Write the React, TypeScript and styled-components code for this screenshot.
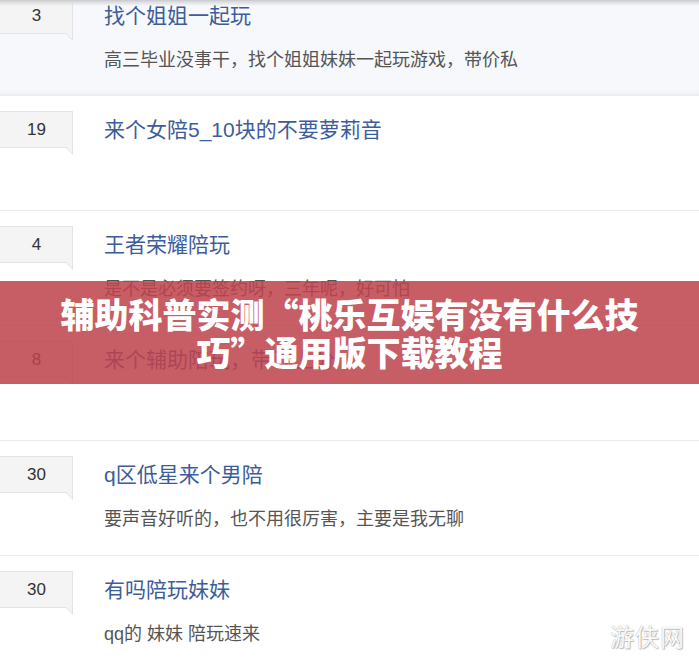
import styled, { createGlobalStyle } from 'styled-components';

type Topic = {
  count: number;
  title: string;
  desc?: string;
};

const topics: Topic[] = [
  { count: 3, title: '找个姐姐一起玩', desc: '高三毕业没事干，找个姐姐妹妹一起玩游戏，带价私' },
  { count: 19, title: '来个女陪5_10块的不要萝莉音' },
  { count: 4, title: '王者荣耀陪玩', desc: '是不是必须要签约呀，三年呢，好可怕' },
  { count: 8, title: '来个辅助陪玩，带飞上分' },
  { count: 30, title: 'q区低星来个男陪', desc: '要声音好听的，也不用很厉害，主要是我无聊' },
  { count: 30, title: '有吗陪玩妹妹', desc: 'qq的 妹妹 陪玩速来' },
];

const GlobalStyle = createGlobalStyle`
  html, body {
    margin: 0;
    padding: 0;
    background: #ffffff;
    overflow: hidden;
  }
  body {
    font-family: "Liberation Sans", "Noto Sans CJK SC", sans-serif;
  }
`;

const Page = styled.div`
  position: relative;
  width: 699px;
  height: 666px;
  overflow: hidden;
`;

const TopEdge = styled.div`
  position: absolute;
  top: 0;
  left: 0;
  right: 0;
  height: 6px;
  background: linear-gradient(#c9c9cc 0, #dcdde0 2px, rgba(240, 241, 246, 0) 6px);
  z-index: 2;
`;

const List = styled.ul`
  list-style: none;
  margin: -18px 0 0;
  padding: 0;
`;

const Row = styled.li<{ $active?: boolean }>`
  display: grid;
  grid-template-columns: 73px 1fr;
  column-gap: 31px;
  align-items: start;
  height: 114px;
  padding-top: 15px;
  box-sizing: border-box;
  border-bottom: 1px solid #ebebeb;
  background: ${(p) => (p.$active ? '#f7f8fc' : '#ffffff')};
  box-shadow: ${(p) => (p.$active ? 'inset 0 -4px 4px -2px #eceef3' : 'none')};
  & + & {
    height: 115px;
  }
`;

const Count = styled.div`
  position: relative;
  height: 37px;
  box-sizing: border-box;
  background: #f4f4f4;
  border: 1px solid #e4e4e4;
  border-left: none;
  color: #333;
  font-size: 17px;
  line-height: 35px;
  text-align: center;
  padding-left: 1px;

  &::before,
  &::after {
    content: '';
    position: absolute;
    right: -1px;
    bottom: -8px;
    width: 8px;
    height: 8px;
    clip-path: polygon(0 0, 100% 0, 100% 100%);
    background: #e2e2e2;
  }
  &::after {
    right: 0;
    bottom: -6px;
    width: 6px;
    height: 6px;
    background: #f4f4f4;
  }
`;

const Body = styled.div`
  display: flex;
  flex-direction: column;
`;

const Title = styled.a`
  color: #3d5c9b;
  font-size: 21px;
  line-height: 37px;
  text-decoration: none;
  white-space: nowrap;
`;

const Desc = styled.p`
  margin: 13px 0 0;
  color: #555;
  font-size: 18px;
  line-height: 26px;
  white-space: nowrap;
`;

const Banner = styled.div`
  position: absolute;
  top: 281px;
  left: 0;
  right: 0;
  height: 103px;
  box-sizing: border-box;
  padding-top: 14px;
  background: rgba(190, 66, 76, 0.86);
  color: #ffffff;
  font-family: "Noto Sans CJK SC", sans-serif;
  font-weight: 900;
  font-size: 34px;
  line-height: 38px;
  text-align: center;
  z-index: 3;
`;

const Watermark = styled.div`
  position: absolute;
  right: 14px;
  bottom: 16px;
  color: #fbfbfb;
  font-family: "Noto Sans CJK SC", sans-serif;
  font-size: 24px;
  line-height: 28px;
  letter-spacing: 1px;
  text-shadow: 0 0 1px #9a9a9a, 1px 1px 1px #c0c0c0;
  z-index: 3;
`;

const App = () => {
  return (
    <Page>
      <GlobalStyle />
      <TopEdge />
      <List>
        {topics.map((t, i) => (
          <Row key={i} $active={i === 0}>
            <Count>{t.count}</Count>
            <Body>
              <Title href="#">{t.title}</Title>
              {t.desc && <Desc>{t.desc}</Desc>}
            </Body>
          </Row>
        ))}
      </List>
      <Banner>
        辅助科普实测“桃乐互娱有没有什么技
        <br />
        巧”通用版下载教程
      </Banner>
      <Watermark>游侠网</Watermark>
    </Page>
  );
};

export default App;
